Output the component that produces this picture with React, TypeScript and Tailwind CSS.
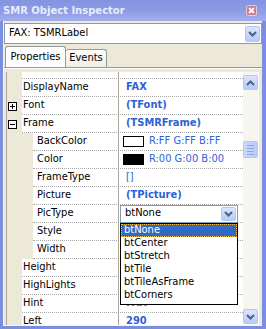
const ui = "font-['DejaVu_Sans_Condensed','Liberation_Sans',sans-serif] text-[11px]";

function Chevron({ up }: { up?: boolean }) {
  return (
    <svg width="9" height="6" viewBox="0 0 9 6">
      <path d={up ? "M1 5L4.5 1.5L8 5" : "M1 1L4.5 4.5L8 1"} stroke="#4d6185" strokeWidth="2" fill="none" />
    </svg>
  );
}

function XpButton({ up, className }: { up?: boolean; className: string }) {
  return (
    <div className={`flex shrink-0 items-center justify-center rounded-[2px] border border-[#b4c6f2] bg-linear-to-b from-[#dbe5fe] to-[#b7caf8] ${className}`}>
      <Chevron up={up} />
    </div>
  );
}

function Expander({ plus }: { plus?: boolean }) {
  return (
    <svg width="9" height="9" viewBox="0 0 9 9" shapeRendering="crispEdges">
      <rect x="0.5" y="0.5" width="8" height="8" fill="white" stroke="black" />
      <path d="M2 4.5H7" stroke="black" />
      {plus && <path d="M4.5 2V7" stroke="black" />}
    </svg>
  );
}

function Row({ name, sub, exp, children }: { name: string; sub?: boolean; exp?: "plus" | "minus"; children?: React.ReactNode }) {
  return (
    <div className="flex h-[18px] shrink-0">
      <div className={sub ? "w-[26px] shrink-0" : "flex w-[15px] shrink-0 items-center pl-[1px]"}>
        {exp && <Expander plus={exp === "plus"} />}
      </div>
      <div className="flex flex-1 border-b border-dotted border-[#a8a8a8] bg-white">
        <div className={`flex shrink-0 items-center border-r border-[#aca899] text-black ${sub ? "w-[86px] pl-[4px]" : "w-[97px] pl-[1px]"}`}>
          {name}
        </div>
        <div className="flex flex-1 items-center pl-[7px] text-[#2e62d4]">{children}</div>
      </div>
    </div>
  );
}

function Swatch({ color, text }: { color: string; text: string }) {
  return (
    <div className="-ml-[3px] flex items-center gap-[5px]">
      <div className={`h-[11px] w-[21px] border border-black ${color}`} />
      <span>{text}</span>
    </div>
  );
}

const picTypes = ["btNone", "btCenter", "btStretch", "btTile", "btTileAsFrame", "btCorners"];

function PicEditor() {
  return (
    <div className="relative z-10 -ml-[6px] flex h-[18px] w-[118px] items-center justify-between border border-[#7f9db9] bg-white pl-[4px] text-black">
      <span>btNone</span>
      <XpButton className="mr-[1px] h-[14px] w-[15px]" />
      <div className="absolute left-[-1px] top-[17px] flex h-[82px] w-[118px] flex-col border border-black bg-white">
        {picTypes.map((t, i) => (
          <div
            key={t}
            className={
              i === 0
                ? "flex h-[13px] items-center border border-dotted border-[#f0b848] bg-[#316ac5] pl-[2px] text-white"
                : "flex h-[13px] items-center pl-[3px] text-black"
            }
          >
            {t}
          </div>
        ))}
      </div>
    </div>
  );
}

function Scrollbar() {
  return (
    <div className="flex w-[15px] shrink-0 flex-col bg-[#f6f5f0] pt-[3px] pb-[1px]">
      <XpButton up className="h-[15px] w-[15px]" />
      <div className="mt-[51px] flex h-[17px] w-[15px] flex-col items-center justify-center gap-[2px] rounded-[2px] border border-[#b4c6f2] bg-linear-to-r from-[#cbd8fc] to-[#b9cbf8]">
        <div className="h-px w-[7px] bg-[#8ea6e6]" />
        <div className="h-px w-[7px] bg-[#8ea6e6]" />
        <div className="h-px w-[7px] bg-[#8ea6e6]" />
        <div className="h-px w-[7px] bg-[#8ea6e6]" />
      </div>
      <div className="flex-1" />
      <XpButton className="h-[15px] w-[15px]" />
    </div>
  );
}

export default function App() {
  return (
    <div className={`flex h-[329px] w-[266px] flex-col overflow-hidden bg-[#7b8ddf] ${ui}`}>
      <div className="flex h-[21px] shrink-0 items-center justify-between bg-linear-to-b from-[#8494e2] via-[#8b9be5] to-[#a2afec] pl-[3px]">
        <span className="font-['DejaVu_Sans',sans-serif] text-[10px] font-bold text-[#e8ecfc]">SMR Object Inspector</span>
        <div className="mr-[9px] flex h-[11px] w-[11px] items-center justify-center rounded-[2px] border border-[#e7c9d2] bg-[#c97a90]">
          <svg width="7" height="7" viewBox="0 0 7 7">
            <path d="M1 1L6 6M6 1L1 6" stroke="white" strokeWidth="1.8" />
          </svg>
        </div>
      </div>

      <div className="mb-[3px] ml-[3px] mr-[4px] flex min-h-0 flex-1 flex-col border-b border-l border-[#f4f3ee] bg-[#ece9d8]">
        <div className="mt-[2px] flex h-[21px] shrink-0 items-center justify-between border border-[#7f9db9] bg-white pl-[4px]">
          <span>FAX: TSMRLabel</span>
          <XpButton className="mr-[1px] h-[16px] w-[15px]" />
        </div>

        <div className="mt-[2px] flex h-[21px] shrink-0 items-end pl-[1px]">
          <div className="flex h-[21px] w-[61px] items-center justify-center rounded-t-[3px] border border-b-0 border-[#919b9c] bg-white">
            Properties
          </div>
          <div className="flex h-[18px] w-[41px] items-center justify-center rounded-t-[3px] border border-b-0 border-l-0 border-[#919b9c] bg-linear-to-b from-[#fefefd] to-[#eeede5]">
            Events
          </div>
        </div>

        <div className="flex min-h-0 flex-1 flex-col border-t border-[#919b9c]">
          <div className="h-px bg-white" />
          <div className="mt-[3px] ml-[2px] mr-[3px] flex min-h-0 flex-1 overflow-hidden border-l border-r border-l-[#aca899] border-r-white">
            <div className="flex flex-1 flex-col">
              <div className="flex h-[7px] shrink-0">
                <div className="w-[15px] shrink-0" />
                <div className="flex flex-1 border-b border-dotted border-[#a8a8a8] bg-white">
                  <div className="w-[97px] border-r border-[#aca899]" />
                </div>
              </div>
              <Row name="DisplayName"><b>FAX</b></Row>
              <Row name="Font" exp="plus"><b>(TFont)</b></Row>
              <Row name="Frame" exp="minus"><b>(TSMRFrame)</b></Row>
              <Row name="BackColor" sub><Swatch color="bg-white" text="R:FF G:FF B:FF" /></Row>
              <Row name="Color" sub><Swatch color="bg-black" text="R:00 G:00 B:00" /></Row>
              <Row name="FrameType" sub>[]</Row>
              <Row name="Picture" sub><b>(TPicture)</b></Row>
              <Row name="PicType" sub><PicEditor /></Row>
              <Row name="Style" sub />
              <Row name="Width" sub />
              <Row name="Height" />
              <Row name="HighLights" />
              <Row name="Hint"><b>FAX</b></Row>
              <Row name="Left"><b>290</b></Row>
            </div>
            <Scrollbar />
          </div>
        </div>
      </div>
    </div>
  );
}
